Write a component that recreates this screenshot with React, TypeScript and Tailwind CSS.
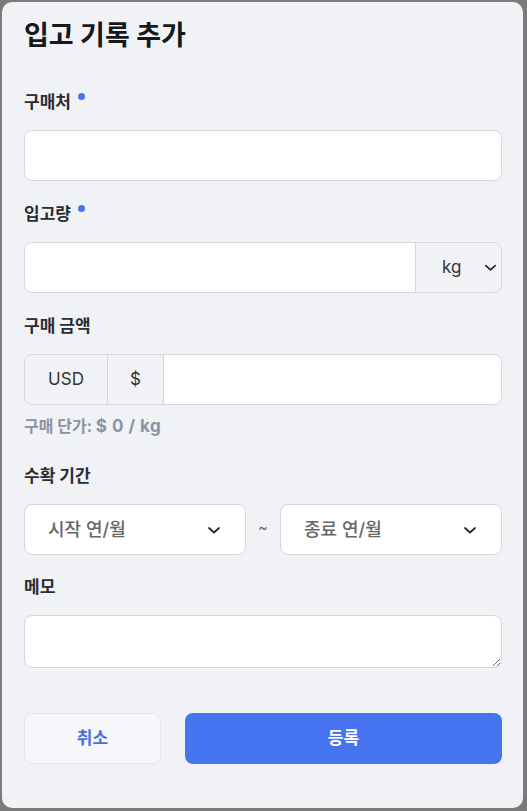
import React from "react";

const font = { fontFamily: 'Inter, "Noto Sans CJK KR", "Noto Sans", sans-serif' };

function Chevron({ className = "" }: { className?: string }) {
  return (
    <svg viewBox="0 0 16 16" className={className} fill="none" stroke="currentColor" strokeWidth={1.7} strokeLinecap="round" strokeLinejoin="round">
      <path d="M3 6l5 4.5L13 6" />
    </svg>
  );
}

function Label({ children, required }: { children: React.ReactNode; required?: boolean }) {
  return (
    <div className="flex items-start text-[17px] leading-[22px] font-bold text-[#2a2d33]">
      {children}
      {required && <span className="ml-[7px] mt-[2px] h-[7px] w-[7px] rounded-full bg-[#4a73f0]" />}
    </div>
  );
}

export default function App() {
  return (
    <div className="h-[811px] w-[527px] bg-[#7b7b7b] pl-[2px] pr-[4px] pt-[2px] pb-[3px]" style={font}>
      <div className="flex h-full flex-col rounded-[10px] bg-[#f0f2f5] pl-[22px] pr-[21px] pt-[16px]">
        <h1 className="text-[27px] leading-[36px] font-bold text-[#15181d]">입고 기록 추가</h1>

        <div className="mt-[37px]">
          <Label required>구매처</Label>
          <input className="mt-[17px] block h-[51px] w-full rounded-[8px] border border-[#d3d6dc] bg-white px-4 outline-none" />
        </div>

        <div className="mt-[22px]">
          <Label required>입고량</Label>
          <div className="mt-[17px] flex h-[51px] overflow-hidden rounded-[8px] border border-[#d3d6dc] bg-white">
            <input className="min-w-0 flex-1 px-4 outline-none" />
            <div className="flex w-[86px] items-center border-l border-[#d3d6dc] bg-[#f0f2f5] pl-[26px] text-[17px] text-[#333]">
              <span>kg</span>
              <Chevron className="ml-[22px] h-[15px] w-[15px] text-[#222]" />
            </div>
          </div>
        </div>

        <div className="mt-[22px]">
          <Label>구매 금액</Label>
          <div className="mt-[17px] flex h-[51px] overflow-hidden rounded-[8px] border border-[#d3d6dc] bg-white">
            <div className="flex w-[83px] items-center justify-center border-r border-[#d3d6dc] bg-[#f0f2f5] text-[17px] text-[#333]">USD</div>
            <div className="flex w-[56px] items-center justify-center border-r border-[#d3d6dc] bg-[#f0f2f5] text-[17px] text-[#333]">$</div>
            <input className="min-w-0 flex-1 px-4 outline-none" />
          </div>
          <div className="mt-[11px] text-[16px] leading-[20px] font-bold text-[#8b94a6]">
            구매 단가: <span className="text-[17px] tracking-[0.5px]">$ 0 / kg</span>
          </div>
        </div>

        <div className="mt-[29px]">
          <Label>수확 기간</Label>
          <div className="mt-[17px] flex items-center">
            <div className="flex h-[51px] flex-1 items-center justify-between rounded-[8px] border border-[#d3d6dc] bg-white pl-[23px] pr-[23px] text-[18px] font-medium text-[#666]">
              <span>시작 연/월</span>
              <Chevron className="h-[16px] w-[16px] text-[#222]" />
            </div>
            <span className="mb-[6px] w-[34px] text-center text-[14px] text-[#555]">~</span>
            <div className="flex h-[51px] flex-1 items-center justify-between rounded-[8px] border border-[#d3d6dc] bg-white pl-[23px] pr-[23px] text-[18px] font-medium text-[#666]">
              <span>종료 연/월</span>
              <Chevron className="h-[16px] w-[16px] text-[#222]" />
            </div>
          </div>
        </div>

        <div className="mt-[21px]">
          <Label>메모</Label>
          <textarea className="mt-[17px] block h-[53px] w-full rounded-[8px] border border-[#d3d6dc] bg-white px-4 py-2 outline-none" />
        </div>

        <div className="mt-[45px] flex gap-[24px]">
          <button className="h-[51px] w-[137px] rounded-[8px] border border-[#e4e7ee] bg-[#f5f7fb] text-[17px] font-bold text-[#4c6fd6]">취소</button>
          <button className="h-[51px] flex-1 rounded-[8px] bg-[#4673f0] text-[17px] font-bold text-white">등록</button>
        </div>
      </div>
    </div>
  );
}
